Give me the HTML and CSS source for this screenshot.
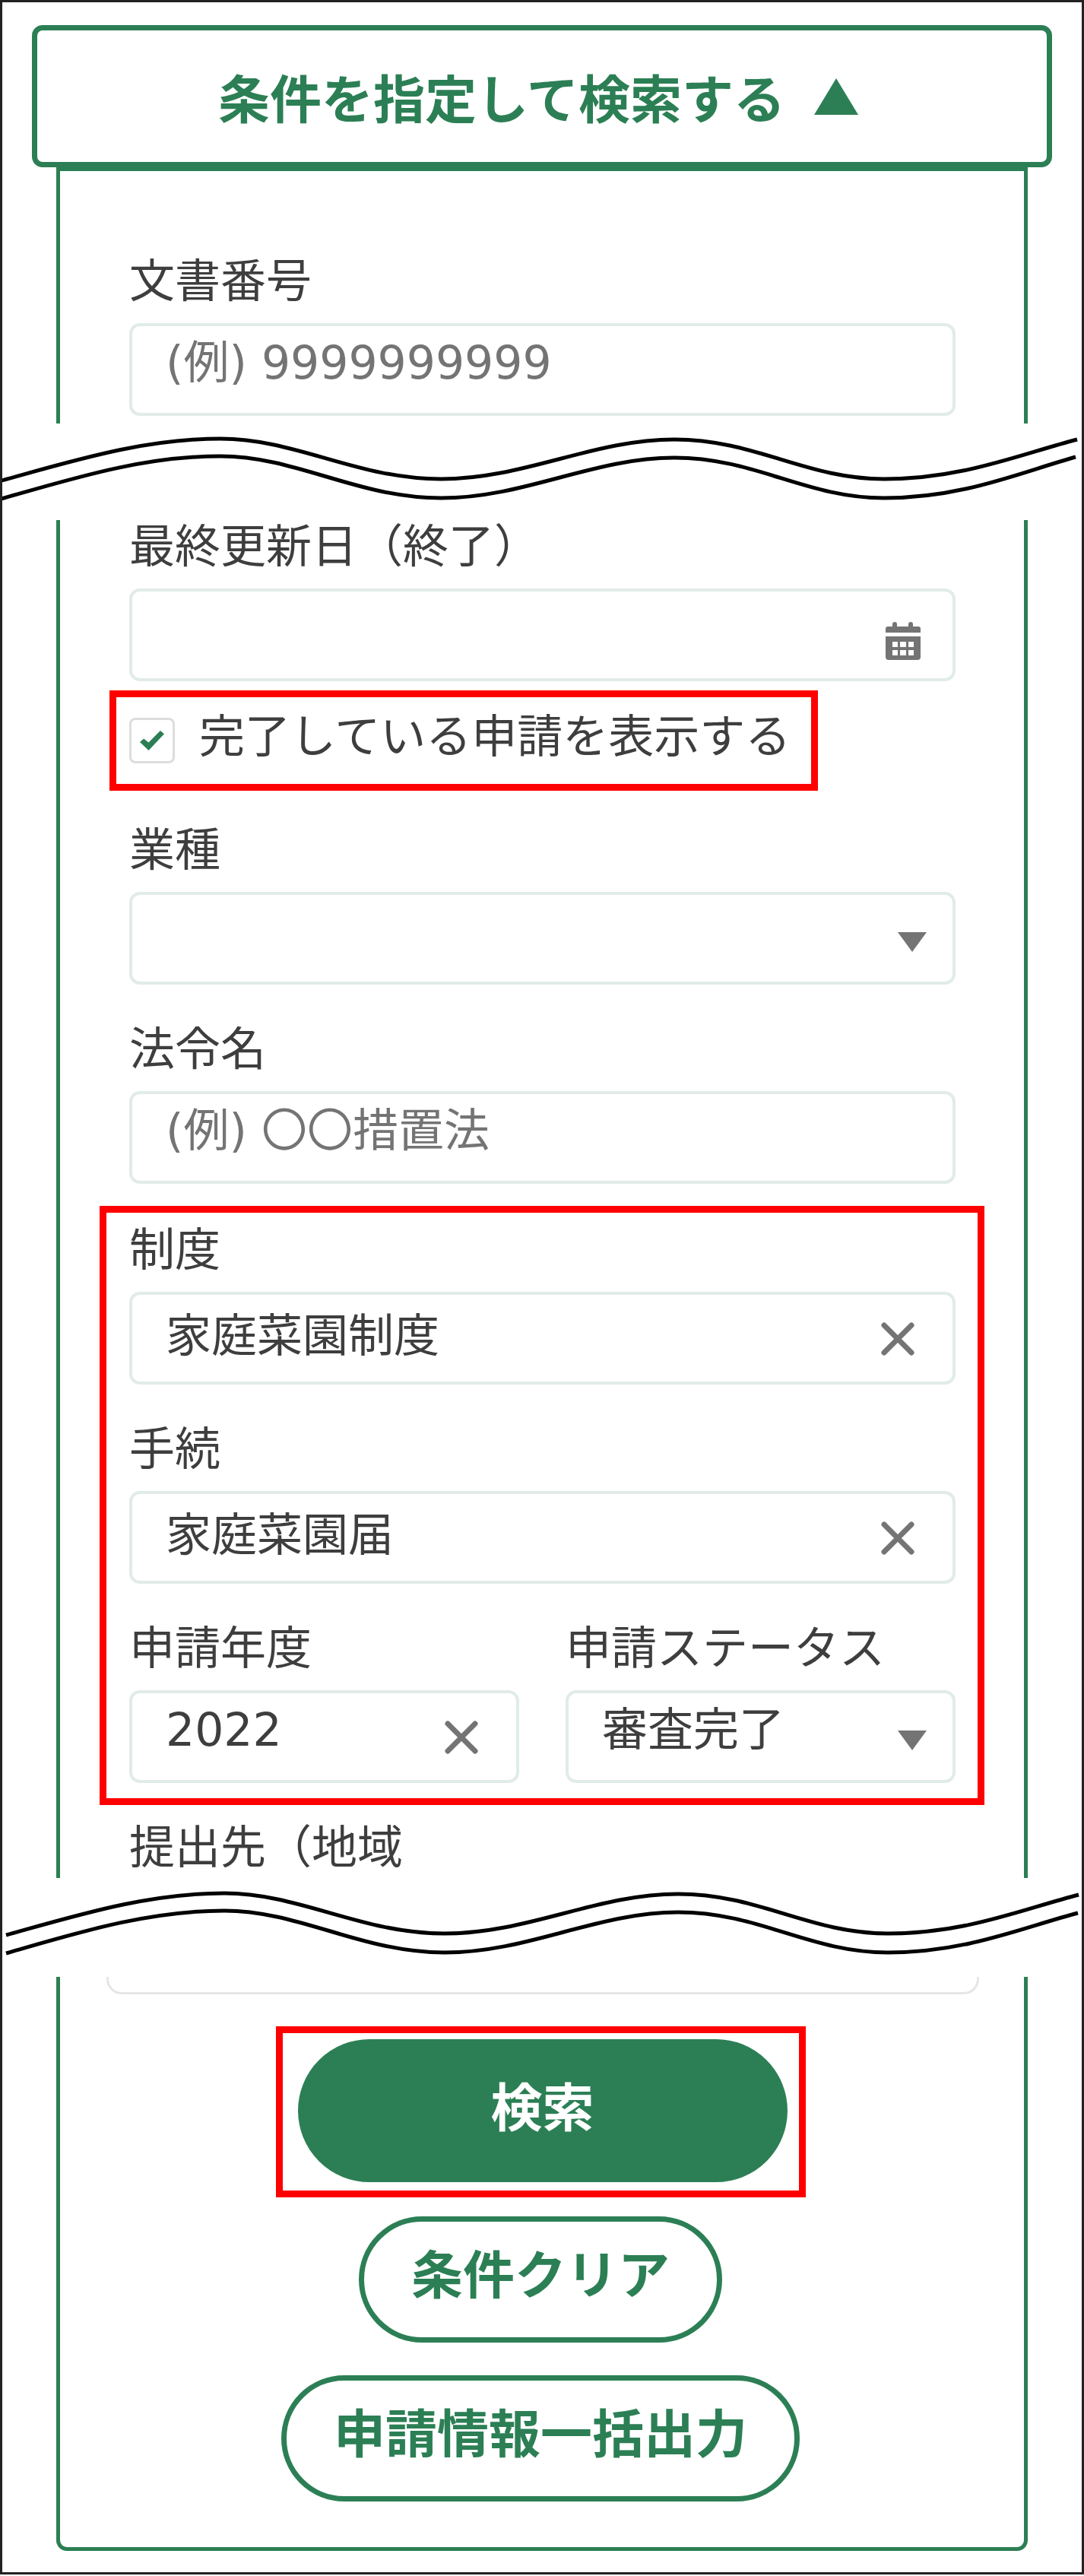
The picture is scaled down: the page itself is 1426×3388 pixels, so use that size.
FILE: index.html
```html
<!DOCTYPE html>
<html lang="ja">
<head>
  <meta charset="utf-8">
  <title>申請検索</title>
  <link rel="stylesheet" href="styles.css">
</head>
<body>
<form class="page">

  <button type="button" class="toggle">
    <span>条件を指定して検索する</span>
    <svg class="toggle-arrow" viewBox="0 0 58 48"><path d="M29 0 58 48H0Z"/></svg>
  </button>

  <div class="panel panel-top">
    <div class="field">
      <label for="docNumber">文書番号</label>
      <input type="text" id="docNumber" placeholder="(例) 9999999999">
    </div>
  </div>

  <svg class="break" viewBox="0 0 1420 130" preserveAspectRatio="none">
    <path d="M-1 75C97 48 187 20 287 20S467 73 577 73S777 21 884 21S1057 73 1160 73S1337 41 1414 21"/>
    <path d="M-1 99C97 71 187 43 287 43S467 98 577 98S777 45 884 45S1057 98 1160 98S1337 65 1412 44"/>
  </svg>

  <div class="panel panel-middle">
    <div class="field">
      <label for="updatedTo">最終更新日（終了）</label>
      <div class="control">
        <input type="text" id="updatedTo">
        <button type="button" class="icon icon-calendar" aria-label="カレンダー">
          <svg viewBox="0 0 46 50">
            <path d="M9 6V3a3 3 0 0 1 6 0v3h15V3a3 3 0 0 1 6 0v3h7a3 3 0 0 1 3 3v5H0V9a3 3 0 0 1 3-3z"/>
            <path fill-rule="evenodd" d="M0 19h46v27a4 4 0 0 1-4 4H4a4 4 0 0 1-4-4zM9 26v7h7v-7zm10 0v7h8v-7zm11 0v7h7v-7zM9 37v7h7v-7zm10 0v7h8v-7zm11 0v7h7v-7z"/>
          </svg>
        </button>
      </div>
    </div>

    <div class="highlight highlight-check">
      <input type="checkbox" id="showDone" checked>
      <label for="showDone">完了している申請を表示する</label>
    </div>

    <div class="field">
      <label for="industry">業種</label>
      <div class="control">
        <select id="industry"><option></option></select>
        <svg class="arrow" viewBox="0 0 38 26"><path d="M0 0H38L19 26Z"/></svg>
      </div>
    </div>

    <div class="field">
      <label for="lawName">法令名</label>
      <input type="text" id="lawName" placeholder="(例) 〇〇措置法">
    </div>

    <div class="highlight highlight-fields">
      <div class="field">
        <label for="system">制度</label>
        <div class="control">
          <input type="text" id="system" value="家庭菜園制度">
          <button type="button" class="icon" aria-label="クリア">
            <svg viewBox="0 0 44 44"><path class="cross" d="M4 4 40 40M40 4 4 40"/></svg>
          </button>
        </div>
      </div>

      <div class="field">
        <label for="procedure">手続</label>
        <div class="control">
          <input type="text" id="procedure" value="家庭菜園届">
          <button type="button" class="icon" aria-label="クリア">
            <svg viewBox="0 0 44 44"><path class="cross" d="M4 4 40 40M40 4 4 40"/></svg>
          </button>
        </div>
      </div>

      <div class="row">
        <div class="field">
          <label for="year">申請年度</label>
          <div class="control">
            <input type="text" id="year" value="2022">
            <button type="button" class="icon" aria-label="クリア">
              <svg viewBox="0 0 44 44"><path class="cross" d="M4 4 40 40M40 4 4 40"/></svg>
            </button>
          </div>
        </div>
        <div class="field">
          <label for="status">申請ステータス</label>
          <div class="control">
            <select id="status"><option>審査完了</option></select>
            <svg class="arrow" viewBox="0 0 38 26"><path d="M0 0H38L19 26Z"/></svg>
          </div>
        </div>
      </div>
    </div>

    <p class="caption">提出先（地域</p>
  </div>

  <svg class="break" viewBox="-5 0 1420 130" preserveAspectRatio="none">
    <path d="M0 75C97 48 187 20 287 20S467 73 577 73S777 21 884 21S1057 73 1160 73S1337 41 1411 22"/>
    <path d="M0 99C97 71 187 43 287 43S467 98 577 98S777 45 884 45S1057 98 1160 98S1337 65 1410 46"/>
  </svg>

  <div class="panel panel-bottom">
    <div class="card-end"></div>
    <div class="highlight highlight-button">
      <button type="submit" class="btn btn-primary">検索</button>
    </div>
    <button type="reset" class="btn">条件クリア</button>
    <button type="button" class="btn">申請情報一括出力</button>
  </div>

</form>
</body>
</html>
```
FILE: styles.css
```css
* {
  box-sizing: border-box;
}

body {
  margin: 0;
  background: #fff;
  color: #3e3e3e;
  font-family: "Noto Sans CJK JP", sans-serif;
  font-size: 60px;
  line-height: 60px;
}

.page {
  padding-bottom: 28px;
  border: 3px solid #222;
}

input, select, button {
  font: inherit;
  color: inherit;
  margin: 0;
}

button {
  padding: 0;
  background: none;
  border: none;
  cursor: pointer;
}

svg {
  display: block;
  fill: #747474;
}

.toggle {
  display: flex;
  justify-content: center;
  align-items: center;
  gap: 38px;
  width: calc(100% - 78px);
  height: 187px;
  margin: 30px 39px 0;
  padding-right: 10px;
  border: 7px solid #2c7f55;
  border-radius: 14px;
  color: #2c7f55;
  font-size: 68px;
  font-weight: bold;
}

.toggle-arrow {
  width: 58px;
  height: 48px;
  fill: #2c7f55;
}

.panel {
  margin: 0 71px;
  border: 0 solid #2c7f55;
  border-left-width: 5px;
  border-right-width: 5px;
}

.panel-top {
  border-top-width: 5px;
  padding: 110px 90px 10px 91px;
}

.panel-middle {
  padding: 0 90px 15px 91px;
}

.panel-bottom {
  display: flex;
  flex-direction: column;
  align-items: center;
  padding-right: 4px;
  padding-bottom: 60px;
  border-bottom-width: 5px;
  border-radius: 0 0 14px 14px;
}

/* torn section of the form */
.break {
  width: 100%;
  height: 130px;
}

.break path {
  fill: none;
  stroke: #000;
  stroke-width: 5;
}

.field label {
  display: block;
  margin-bottom: 30px;
  white-space: nowrap;
}

.field + .field {
  margin-top: 50px;
}

/* first label sits right against the torn edge */
.panel-middle > .field:first-child label {
  margin-top: -3px;
}

input[type="text"], select {
  display: block;
  width: 100%;
  height: 122px;
  padding: 0 110px 18px 44px;
  border: 4px solid #e1ece8;
  border-radius: 14px;
  background: #fff;
  font-family: "DejaVu Sans", "Noto Sans CJK JP", sans-serif;
  appearance: none;
}

input::placeholder {
  color: #747474;
  opacity: 1;
}

.control {
  position: relative;
}

.icon {
  position: absolute;
  top: 40px;
  right: 54px;
  width: 44px;
  height: 44px;
}

.icon-calendar {
  top: 44px;
  right: 46px;
  width: 46px;
  height: 50px;
}

.cross {
  fill: none;
  stroke: #747474;
  stroke-width: 7;
  stroke-linecap: round;
}

.arrow {
  position: absolute;
  top: 53px;
  right: 38px;
  width: 38px;
  height: 26px;
  pointer-events: none;
}

.highlight {
  border: 9px solid #f00;
}

.highlight-check {
  display: flex;
  align-items: center;
  gap: 32px;
  width: fit-content;
  height: 132px;
  margin: 12px 0 43px -26px;
  padding: 0 27px 0 17px;
}

.highlight-check label {
  padding-bottom: 20px;
  white-space: nowrap;
}

input[type="checkbox"] {
  display: grid;
  place-items: center;
  width: 60px;
  height: 60px;
  border: 3px solid #ddd;
  border-radius: 8px;
  background: #fff;
  appearance: none;
}

input[type="checkbox"]:checked::before {
  content: "";
  width: 32px;
  height: 26px;
  background: #2c7f55;
  clip-path: polygon(0 58%, 16% 40%, 36% 60%, 84% 0, 100% 16%, 36% 100%);
}

.highlight-fields {
  margin: 29px -38px 21px -39px;
  padding: 14px 29px 20px 30px;
}

.row {
  display: grid;
  grid-template-columns: 1fr 1fr;
  gap: 61px;
  margin-top: 50px;
}

.row .field + .field {
  margin-top: 0;
}

.caption {
  margin: 0;
}

.card-end {
  align-self: stretch;
  height: 23px;
  margin: 0 55px 42px 61px;
  border: 3px solid #e6e6e6;
  border-top: none;
  border-radius: 0 0 20px 20px;
}

.highlight-button {
  padding: 8px 15px 11px 20px;
}

.btn {
  display: block;
  height: 166px;
  margin-top: 43px;
  padding: 0 62px 20px;
  border: 7px solid #2c7f55;
  border-radius: 83px;
  color: #2c7f55;
  font-size: 68px;
  font-weight: bold;
}

.highlight-button + .btn {
  margin-top: 25px;
}

.btn-primary {
  width: 644px;
  height: 188px;
  margin: 0;
  padding-bottom: 16px;
  border-radius: 94px;
  background: #2c7f55;
  color: #fff;
}
```
